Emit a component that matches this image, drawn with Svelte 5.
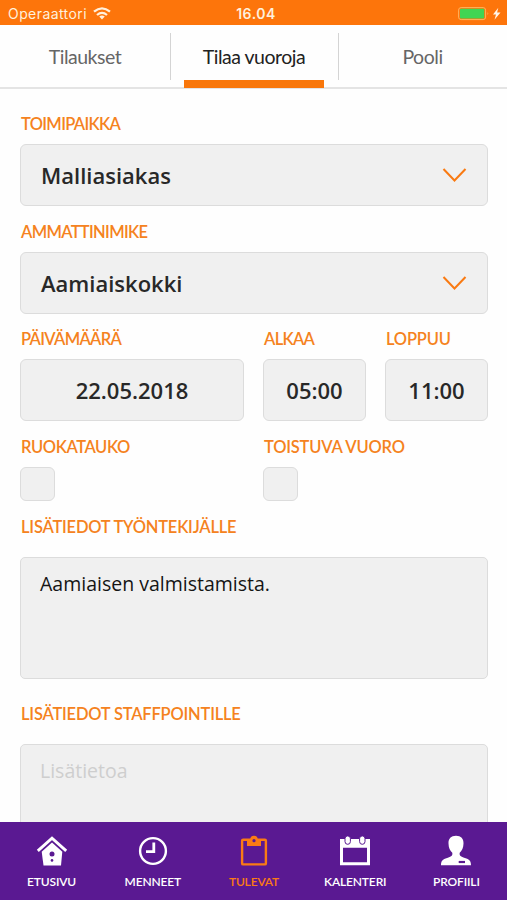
<script lang="ts">
	interface Props {
		worksite?: string;
		title?: string;
	}

	let { worksite = 'Malliasiakas', title = 'Aamiaiskokki' }: Props = $props();

	const tabs = ['Tilaukset', 'Tilaa vuoroja', 'Pooli'];
	const navItems = [
		{ id: 'home', label: 'ETUSIVU' },
		{ id: 'past', label: 'MENNEET' },
		{ id: 'upcoming', label: 'TULEVAT' },
		{ id: 'calendar', label: 'KALENTERI' },
		{ id: 'profile', label: 'PROFIILI' }
	];

	let activeTab = $state('Tilaa vuoroja');
	let activeNav = $state('upcoming');
	let message = $state('Aamiaisen valmistamista.');
	let mealBreak = $state(false);
	let recurring = $state(false);
</script>

{#snippet select(value: string)}
	<button class="box select">
		<span>{value}</span>
		<svg width="26" height="16" viewBox="0 0 26 16" fill="none" stroke="#f97a12" stroke-width="2">
			<path d="M1.5 2 12.5 13.5 23.5 2" />
		</svg>
	</button>
{/snippet}

<div class="app">
	<header class="status">
		<div class="carrier">
			<span>Operaattori</span>
			<svg width="18" height="13" viewBox="0 0 18 13" fill="none" stroke="#fff0dc" stroke-width="2.3">
				<path d="M1 4.7Q9-2 17 4.7" />
				<path d="M4 8Q9 3.7 14 8" />
				<path d="M9 12.4 6.2 9.5Q9 7.3 11.8 9.5Z" fill="#fff0dc" stroke="none" />
			</svg>
		</div>
		<time>16.04</time>
		<div class="power">
			<svg width="43" height="14" viewBox="0 0 43 14">
				<rect x=".6" y=".6" width="27" height="12" rx="2.5" fill="none" stroke="#ffb45e" stroke-width="1" />
				<rect x="2" y="1.8" width="24.2" height="9.6" rx="1" fill="#41d553" />
				<path d="M29.5 5q1.7 1.5 0 3.2Z" fill="#ffb45e" />
				<path d="M40.3 .8 35 7.4h3l-1.5 5.3 6-7.3h-3.4Z" fill="#fff5e8" />
			</svg>
		</div>
	</header>

	<nav class="tabs">
		{#each tabs as tab (tab)}
			<button class:active={tab === activeTab} onclick={() => (activeTab = tab)}>
				<span>{tab}</span>
			</button>
		{/each}
	</nav>

	<main>
		<section class="field">
			<h2 class="tight">TOIMIPAIKKA</h2>
			{@render select(worksite)}
		</section>
		<section class="field">
			<h2 class="tight">AMMATTINIMIKE</h2>
			{@render select(title)}
		</section>
		<div class="row times">
			<section class="field">
				<h2 class="tight">PÄIVÄMÄÄRÄ</h2>
				<button class="box">22.05.2018</button>
			</section>
			<section class="field">
				<h2 class="tight">ALKAA</h2>
				<button class="box">05:00</button>
			</section>
			<section class="field">
				<h2>LOPPUU</h2>
				<button class="box">11:00</button>
			</section>
		</div>
		<div class="row checks">
			<label>
				<h2 class="snug">RUOKATAUKO</h2>
				<input type="checkbox" bind:checked={mealBreak} />
			</label>
			<label>
				<h2>TOISTUVA VUORO</h2>
				<input type="checkbox" bind:checked={recurring} />
			</label>
		</div>
		<section class="notes">
			<h2>LISÄTIEDOT TYÖNTEKIJÄLLE</h2>
			<textarea bind:value={message} spellcheck="false"></textarea>
		</section>
		<section class="notes">
			<h2>LISÄTIEDOT STAFFPOINTILLE</h2>
			<textarea placeholder="Lisätietoa"></textarea>
		</section>
	</main>

	<nav class="bottom">
		{#each navItems as item (item.id)}
			<button class:active={item.id === activeNav} onclick={() => (activeNav = item.id)}>
				<svg width="32" height="32" viewBox="0 0 32 32" fill="none" stroke="currentColor">
					{#if item.id === 'home'}
						<path d="M1.8 15.8 16 3.2 30.2 15.8" stroke-width="2.9" />
						<path d="M16 7.6 26.3 16.8 25 30.5H7.5L5.7 16.8Z" fill="currentColor" stroke="none" />
						<circle cx="16" cy="19" r="2.5" fill="#5a1992" stroke="none" />
						<circle cx="16" cy="25.4" r="1.3" fill="#5a1992" stroke="none" />
					{:else if item.id === 'past'}
						<circle cx="16" cy="16" r="12.9" stroke-width="2.4" />
						<path d="M16.8 7.5V16.7H9" stroke-width="2.8" />
					{:else if item.id === 'upcoming'}
						<rect x="4.1" y="4.7" width="23.8" height="24.7" rx="1" stroke-width="2.4" />
						<path d="M9 4.5h3.2a3.8 3.8 0 0 1 7.6 0H23v6.5H9Z" fill="currentColor" stroke="none" />
						<circle cx="16" cy="5.7" r="1.6" fill="#5a1992" stroke="none" />
					{:else if item.id === 'calendar'}
						<path d="M1 4H31V30.3H1ZM4 12.8V27.3H28V12.8Z" fill="currentColor" fill-rule="evenodd" stroke="none" />
						<rect x="6" y=".9" width="5.4" height="8.4" rx="2.7" fill="currentColor" stroke="#5a1992" />
						<rect x="20.6" y=".9" width="5.4" height="8.4" rx="2.7" fill="currentColor" stroke="#5a1992" />
					{:else}
						<path
							d="M16 .8c5 0 7.7 3 7.5 7.8-.1 4.4-1.5 7-3.8 9.2-.5 3.2 1.2 4 5.2 5.2 4.4 1.3 6.1 2.8 6.1 7.3H1c0-4.500 1.700-6 6.100-7.300 4-1.200 5.700-2 5.200-5.200C10 15.600 8.600 13 8.500 8.600 8.300 3.800 11 .8 16 .8Z"
							fill="currentColor"
							stroke="none"
						/>
						<path d="M18.7 27H25" stroke="#5a1992" stroke-width="2.2" />
					{/if}
				</svg>
				<span>{item.label}</span>
			</button>
		{/each}
	</nav>
</div>

<style>
	:global(body) {
		background: #fff;
	}
	.app {
		display: flex;
		flex-direction: column;
		height: 900px;
		overflow: hidden;
		background: #fefefe;
		font-family: 'Open Sans', 'Noto Sans', sans-serif;
	}
	button {
		padding: 0;
		border: 0;
		background: none;
		font: inherit;
		letter-spacing: inherit;
		color: inherit;
	}
	svg {
		display: block;
		flex: none;
	}

	.status {
		display: grid;
		grid-template-columns: 1fr auto 1fr;
		align-items: center;
		flex: none;
		height: 25px;
		padding: 2px 6px 0 8px;
		box-sizing: border-box;
		background: #fd750b;
		color: #fff0dc;
		font: 14px/20px Inter, 'Liberation Sans', sans-serif;
	}
	.carrier {
		display: flex;
		align-items: center;
		gap: 6px;
		letter-spacing: 0.42px;
	}
	time {
		padding-left: 3px;
		font-weight: 600;
		letter-spacing: 0.5px;
	}
	.power {
		justify-self: end;
	}

	.tabs {
		display: grid;
		grid-template-columns: 170px 168px 1fr;
		flex: none;
		height: 64px;
		box-sizing: border-box;
		border-bottom: 2px solid #e4e4e4;
		font: 19.5px/24px Lato, sans-serif;
		letter-spacing: -0.48px;
		color: #666;
	}
	.tabs button {
		display: flex;
		align-items: center;
		justify-content: center;
		position: relative;
		padding-top: 2px;
	}
	.tabs button + button::before {
		content: '';
		position: absolute;
		left: 0;
		top: 8px;
		width: 1px;
		height: 47px;
		background: #d4d4d4;
	}
	.tabs .active {
		color: #222;
	}
	.tabs .active::after {
		content: '';
		position: absolute;
		left: 14px;
		right: 14px;
		bottom: -1px;
		height: 8px;
		background: #f9770b;
	}

	main {
		flex: 1;
		min-height: 0;
		overflow: hidden;
		padding: 24px 19px 0 20px;
	}
	h2 {
		margin: 0 0 0 1px;
		font: 600 16.5px/22px Lato, sans-serif;
		letter-spacing: -0.2px;
		color: #f58220;
		white-space: nowrap;
	}
	.tight {
		letter-spacing: -0.68px;
	}
	.snug {
		letter-spacing: -0.4px;
	}
	.field {
		height: 107.5px;
	}
	.box {
		display: block;
		width: 100%;
		height: 62px;
		margin-top: 9px;
		box-sizing: border-box;
		border: 1px solid #dcdcdc;
		border-radius: 6px;
		background: #f0f0f0;
		font-size: 22px;
		font-weight: 600;
		color: #282828;
	}
	.select {
		display: flex;
		align-items: center;
		justify-content: space-between;
		padding: 0 19px 0 20px;
	}
	.row {
		display: grid;
	}
	.times {
		grid-template-columns: 224px 103px 103px;
		gap: 19px;
	}
	.checks {
		grid-template-columns: 243px 1fr;
		height: 80px;
	}
	.checks input {
		display: block;
		appearance: none;
		width: 35px;
		height: 34px;
		margin: 9px 0 0;
		box-sizing: border-box;
		border: 1px solid #dcdcdc;
		border-radius: 6px;
		background: #f0f0f0;
	}
	.checks input:checked {
		background: #f58220;
	}
	.notes {
		height: 187px;
	}
	textarea {
		display: block;
		width: 100%;
		height: 122px;
		margin-top: 19px;
		padding: 12px 19px;
		box-sizing: border-box;
		resize: none;
		overflow: hidden;
		border: 1px solid #dcdcdc;
		border-radius: 5px;
		background: #f0f0f0;
		font: 19.5px/27px 'Open Sans', 'Noto Sans', sans-serif;
		color: #151515;
	}
	textarea::placeholder {
		color: #cecece;
	}

	.bottom {
		display: grid;
		grid-template-columns: repeat(5, 1fr);
		flex: none;
		height: 78px;
		padding-left: 1px;
		box-sizing: border-box;
		background: #5a1992;
		color: #fff;
		font: 600 12px/16px Lato, sans-serif;
		letter-spacing: -0.15px;
	}
	.bottom button {
		display: flex;
		flex-direction: column;
		align-items: center;
		justify-content: flex-start;
		gap: 7px;
		padding-top: 13px;
	}
	.bottom .active {
		color: #fa7b14;
	}
</style>
